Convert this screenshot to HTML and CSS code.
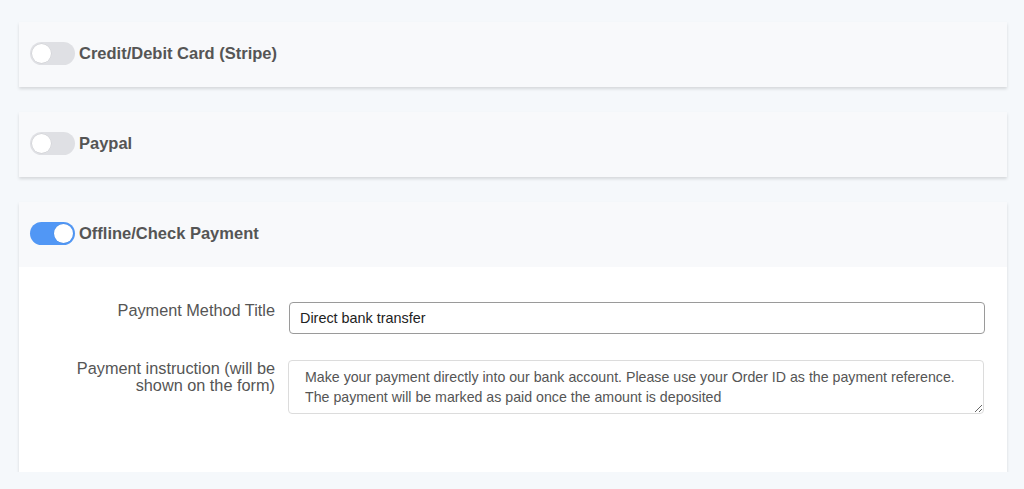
FILE: index.html
```html
<!DOCTYPE html>
<html>
<head>
<meta charset="utf-8">
<link rel="stylesheet" href="styles.css">
</head>
<body>
<div class="page">
  <section class="card">
    <header class="card-head">
      <span class="toggle"><span class="knob"></span></span>
      <span class="title">Credit/Debit Card (Stripe)</span>
    </header>
  </section>
  <section class="card">
    <header class="card-head">
      <span class="toggle"><span class="knob"></span></span>
      <span class="title">Paypal</span>
    </header>
  </section>
  <section class="card">
    <header class="card-head">
      <span class="toggle on"><span class="knob"></span></span>
      <span class="title">Offline/Check Payment</span>
    </header>
    <div class="card-body">
      <div class="row">
        <label class="label">Payment Method Title</label>
        <div class="field"><input class="input" type="text" value="Direct bank transfer"></div>
      </div>
      <div class="row">
        <label class="label">Payment instruction (will be<br>shown on the form)</label>
        <div class="field"><textarea class="textarea">Make your payment directly into our bank account. Please use your Order ID as the payment reference. The payment will be marked as paid once the amount is deposited</textarea></div>
      </div>
    </div>
  </section>
</div>
</body>
</html>
```

FILE: styles.css
```css
html, body {
  margin: 0;
  padding: 0;
  background: #f5f8fb;
  font-family: "Liberation Sans", Arial, sans-serif;
}
.page {
  padding: 22px 17px 0 19px;
  display: flex;
  flex-direction: column;
  gap: 25px;
}
.card {
  background: #f8f9fb;
  box-shadow: 0 2px 3px rgba(0, 0, 0, 0.13);
}
.card-head {
  height: 65px;
  display: flex;
  align-items: center;
  padding-left: 11px;
  padding-bottom: 2px;
  box-sizing: border-box;
  gap: 4px;
}
.card-head.last { height: 66px; }
.toggle {
  width: 45px;
  height: 23px;
  border-radius: 12px;
  background: #dfe0e4;
  box-sizing: border-box;
  padding: 2px;
  display: flex;
  align-items: center;
}
.toggle .knob {
  width: 19px;
  height: 19px;
  border-radius: 50%;
  background: #fff;
  box-shadow: 0 0 0 0.5px rgba(0,0,0,0.08);
}
.toggle.on {
  background: #5197f5;
  justify-content: flex-end;
}
.title {
  font-size: 16.5px;
  font-weight: bold;
  color: #555;
}
.card-body {
  background: #fff;
  padding: 35px 22px 58px 0;
  display: flex;
  flex-direction: column;
  gap: 26px;
}
.row {
  display: grid;
  grid-template-columns: 256px 1fr;
  column-gap: 14px;
  align-items: start;
}
.label {
  text-align: right;
  font-size: 16.3px;
  line-height: 17px;
  color: #555;
}
.input {
  display: block;
  width: 100%;
  box-sizing: border-box;
  height: 32px;
  border: 1px solid #9a9a9a;
  border-radius: 4px;
  padding: 0 10px;
  font-family: "Liberation Sans", Arial, sans-serif;
  font-size: 14.4px;
  color: #222;
  background: #fff;
  outline: none;
}
.textarea {
  display: block;
  width: 100%;
  box-sizing: border-box;
  height: 54px;
  border: 1px solid #dcdcdc;
  border-radius: 4px;
  padding: 6px 16px 0;
  font-family: "Liberation Sans", Arial, sans-serif;
  font-size: 14.2px;
  line-height: 20px;
  color: #555;
  background: #fff;
  resize: vertical;
  margin-left: -1px;
  overflow: hidden;
}
```
